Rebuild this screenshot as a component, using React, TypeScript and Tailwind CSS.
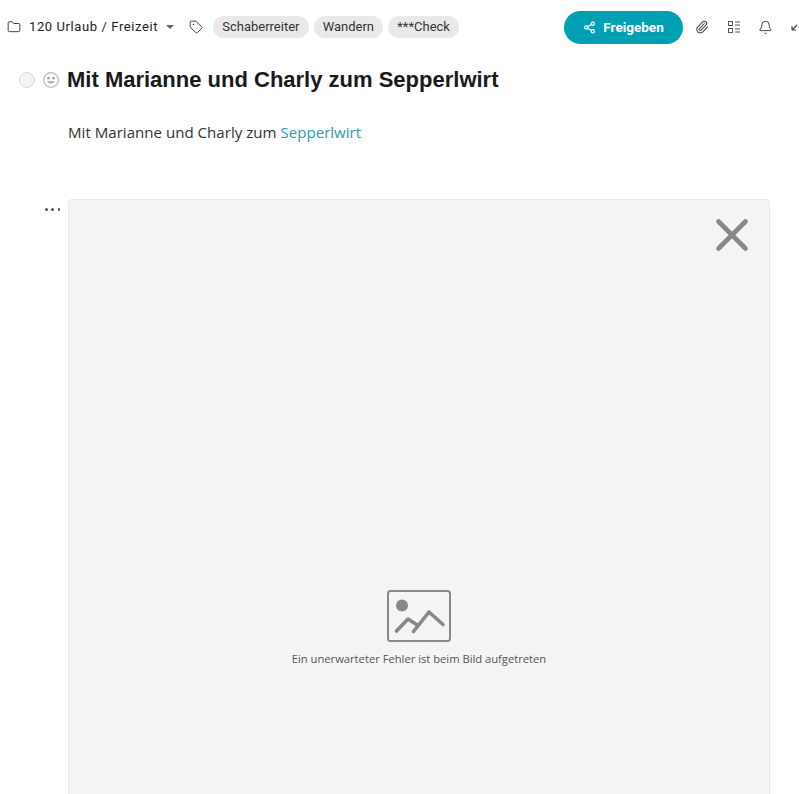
import { Bell, Folder, Paperclip, Share2, Tag } from "lucide-react";

const tags = ["Schaberreiter", "Wandern", "***Check"];

function Toolbar() {
  return (
    <div className="flex h-[54px] w-[820px] items-center pl-[7px] font-['Roboto',sans-serif] text-[#222]">
      <Folder size={14} strokeWidth={1.6} className="shrink-0 text-[#333]" />
      <span className="ml-[8px] text-[13px] tracking-[0.6px]">120 Urlaub / Freizeit</span>
      <span className="ml-[8px] h-0 w-0 border-x-[4px] border-t-[4px] border-x-transparent border-t-[#666]" />
      <Tag size={14} strokeWidth={1.6} className="ml-[15px] shrink-0 text-[#333]" />
      <div className="ml-[10px] flex gap-[5px]">
        {tags.map((t) => (
          <span key={t} className="flex h-[22px] items-center rounded-full bg-[#e9e9e9] px-[9.1px] text-[13px] text-[#333]">
            {t}
          </span>
        ))}
      </div>
      <button className="ml-[105px] flex h-[33px] w-[119px] items-center justify-center gap-[7px] rounded-full bg-[#00a0b4] text-[13.5px] font-bold text-white">
        <Share2 size={13} strokeWidth={2.2} />
        Freigeben
      </button>
      <Paperclip size={14} strokeWidth={1.8} className="ml-[12px] text-[#444]" />
      <svg width="14" height="14" viewBox="0 0 14 14" fill="none" stroke="#555" strokeWidth="1" className="ml-[18px]">
        <rect x="1.5" y="1.5" width="4" height="4" />
        <rect x="1.5" y="8.5" width="4" height="4" />
        <path d="M8 2h5M8 5h5M8 9h5M8 12h5" />
      </svg>
      <Bell size={15} strokeWidth={1.5} className="ml-[17px] text-[#333]" />
      <svg width="10" height="10" viewBox="0 0 10 10" fill="none" stroke="#444" strokeWidth="1.1" className="ml-[18px] mt-[4px] shrink-0">
        <path d="M6 1 1 6M1 2v4h4" />
      </svg>
    </div>
  );
}

export default function App() {
  return (
    <div className="h-[794px] w-[799px] overflow-hidden bg-white">
      <Toolbar />
      <div className="mt-[13px] flex items-center pl-[19px]">
        <span className="h-[16px] w-[16px] rounded-full border border-[#d8d8d8] bg-[#f3f3f3]" />
        <svg width="16" height="16" viewBox="0 0 16 16" fill="none" className="ml-[8px]">
          <circle cx="8" cy="8" r="7.3" stroke="#bbb" strokeWidth="1.3" />
          <circle cx="5.5" cy="6.2" r="1.4" fill="#aaa" />
          <circle cx="10.5" cy="6.2" r="1.4" fill="#aaa" />
          <path d="M4.2 9.3c1 3 6.6 3 7.6 0z" fill="#aaa" />
        </svg>
        <h1 className="ml-[8px] font-['Liberation_Sans',sans-serif] text-[22px] leading-[26px] font-bold text-[#1a1a1a]">
          Mit Marianne und Charly zum Sepperlwirt
        </h1>
      </div>
      <p className="mt-[29px] pl-[68px] font-['Open_Sans',sans-serif] text-[15.1px] leading-[20px] text-[#333]">
        Mit Marianne und Charly zum <a className="text-[#2b9bae]">Sepperlwirt</a>
      </p>
      <div className="mt-[57px] flex pl-[45px]">
        <div className="mt-[9px] flex h-[3px] w-[15px] justify-between">
          <span className="h-[2.5px] w-[2.5px] rounded-full bg-[#555]" />
          <span className="h-[2.5px] w-[2.5px] rounded-full bg-[#555]" />
          <span className="h-[2.5px] w-[2.5px] rounded-full bg-[#555]" />
        </div>
        <div className="relative ml-[8px] flex h-[640px] w-[702px] shrink-0 flex-col items-center rounded-[4px] border border-[#e8e8e8] bg-[#f4f4f4] pt-[390px]">
          <svg width="34" height="34" viewBox="0 0 34 34" fill="none" stroke="#888" strokeWidth="4.6" strokeLinecap="round" className="absolute top-[18px] right-[20px]">
            <path d="M3.5 3.5l27 27M30.5 3.5l-27 27" />
          </svg>
          <svg width="64" height="52" viewBox="0 0 64 52" fill="none" stroke="#888">
            <rect x="1" y="1" width="62" height="50" rx="2.5" strokeWidth="2" />
            <circle cx="15" cy="15.5" r="6" fill="#888" stroke="none" />
            <path d="M9.5 41 21 29l10 6.5M26.5 41.5 42 22l14 12.5" strokeWidth="3.6" strokeLinecap="round" strokeLinejoin="round" />
          </svg>
          <p className="mt-[10px] font-['Open_Sans',sans-serif] text-[11.2px] leading-[14px] text-[#555]">
            Ein unerwarteter Fehler ist beim Bild aufgetreten
          </p>
        </div>
      </div>
    </div>
  );
}
